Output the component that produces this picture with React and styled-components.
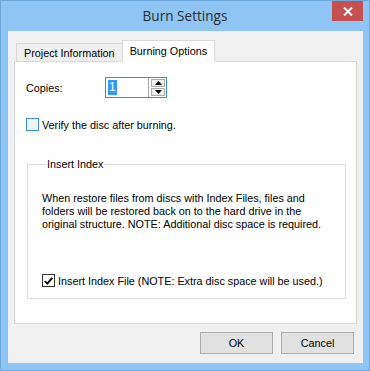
import styled, { createGlobalStyle } from "styled-components";

const Global = createGlobalStyle`
  html, body {
    margin: 0;
    padding: 0;
    background: #ffffff;
  }
  * {
    box-sizing: border-box;
  }
`;

const Window = styled.div`
  width: 370px;
  height: 371px;
  background: #8ec5f4;
  border: 1px solid #6ea9de;
  display: flex;
  flex-direction: column;
  font-family: "Liberation Sans", Arial, sans-serif;
  font-size: 10.8px;
  color: #000;
`;

const TitleBar = styled.div`
  height: 30px;
  display: grid;
  grid-template-columns: 1fr auto 1fr;
  align-items: start;
`;

const Title = styled.div`
  grid-column: 2;
  font-family: "Open Sans", "Noto Sans", sans-serif;
  font-size: 13.6px;
  color: #2b2b2b;
  line-height: 29px;
`;

const Close = styled.div`
  grid-column: 3;
  justify-self: end;
  width: 31px;
  height: 20px;
  margin-right: 6px;
  background: #c75050;
  display: flex;
  align-items: center;
  justify-content: center;
`;

const Client = styled.div`
  flex: 1;
  margin: 0 6px 7px 7px;
  background: #f0f0f0;
  padding: 8px 9px 9px 6px;
  display: flex;
  flex-direction: column;
`;

const TabStrip = styled.div`
  display: flex;
  align-items: flex-end;
  padding-left: 2px;
  height: 22px;
  position: relative;
  z-index: 1;
`;

const Tab = styled.div`
  height: ${(p) => (p.$active ? "22px" : "18px")};
  padding: 0 ${(p) => (p.$active ? "7px" : "7px")};
  margin-left: ${(p) => (p.$active ? "-1px" : "0")};
  margin-bottom: ${(p) => (p.$active ? "-1px" : "0")};
  background: ${(p) => (p.$active ? "#ffffff" : "#f0f0f0")};
  border: 1px solid #d9d9d9;
  border-bottom: ${(p) => (p.$active ? "1px solid #ffffff" : "none")};
  display: flex;
  align-items: center;
`;

const Panel = styled.div`
  height: 263px;
  margin-right: -3px;
  background: #ffffff;
  border: 1px solid #d9d9d9;
  padding: 15px 9px 0 11px;
  display: flex;
  flex-direction: column;
`;

const Row = styled.div`
  display: flex;
  align-items: center;
`;

const Label = styled.div`
  width: 79px;
`;

const Spin = styled.div`
  width: 62px;
  height: 21px;
  border: 1px solid #3c8ee0;
  display: flex;
  align-items: center;
  padding-left: 2px;
`;

const Selected = styled.span`
  background: #3399ff;
  color: #fff;
  font-size: 12px;
  line-height: 15px;
  padding: 0 1px;
`;

const SpinButtons = styled.div`
  margin-left: auto;
  height: 100%;
  display: flex;
  flex-direction: column;
  justify-content: center;
  gap: 1px;
  padding: 1px 1px 1px 2px;
  border-left: 1px solid #a0a0a0;
`;

const SpinButton = styled.div`
  width: 14px;
  height: 8px;
  background: #f0f0f0;
  border: 1px solid #acacac;
  display: flex;
  align-items: center;
  justify-content: center;
`;

const Check = styled.div`
  width: 13px;
  height: 13px;
  border: 1px solid ${(p) => (p.$hover ? "#3c8ee0" : "#333")};
  background: ${(p) => (p.$hover ? "#eef6ff" : "#fff")};
  display: flex;
  align-items: center;
  justify-content: center;
  margin-right: 3px;
`;

const VerifyRow = styled(Row)`
  margin-top: 20px;
`;

const Group = styled.fieldset`
  margin: 27px 0 0 1px;
  width: 319px;
  height: 141px;
  border: 1px solid #dcdcdc;
  padding: 22px 0 0 14px;
`;

const Legend = styled.legend`
  padding: 0 1px;
  margin-left: 4px;
`;

const Para = styled.p`
  margin: 0;
  line-height: 13px;
  width: 285px;
`;

const GroupCheck = styled(Row)`
  margin-top: 43px;
`;

const Footer = styled.div`
  margin-top: 8px;
  display: flex;
  justify-content: flex-end;
  gap: 8px;
`;

const Button = styled.div`
  width: 73px;
  height: 22px;
  background: #e1e1e1;
  border: 1px solid #adadad;
  display: flex;
  align-items: center;
  justify-content: center;
`;

const Arrow = ({ up }) => (
  <svg width="7" height="4" viewBox="0 0 7 4">
    <path d={up ? "M0 4 L3.5 0 L7 4 Z" : "M0 0 L7 0 L3.5 4 Z"} fill="#000" />
  </svg>
);

export default function App() {
  return (
    <>
      <Global />
      <Window>
        <TitleBar>
          <Title>Burn Settings</Title>
          <Close>
            <svg width="10" height="9" viewBox="0 0 10 9">
              <path d="M1 0.5 L9 8.5 M9 0.5 L1 8.5" stroke="#fff" strokeWidth="2" />
            </svg>
          </Close>
        </TitleBar>
        <Client>
          <TabStrip>
            <Tab>Project Information</Tab>
            <Tab $active>Burning Options</Tab>
          </TabStrip>
          <Panel>
            <Row>
              <Label>Copies:</Label>
              <Spin>
                <Selected>1</Selected>
                <SpinButtons>
                  <SpinButton>
                    <Arrow up />
                  </SpinButton>
                  <SpinButton>
                    <Arrow />
                  </SpinButton>
                </SpinButtons>
              </Spin>
            </Row>
            <VerifyRow>
              <Check $hover />
              <div>Verify the disc after burning.</div>
            </VerifyRow>
            <Group>
              <Legend>Insert Index</Legend>
              <Para>
                When restore files from discs with Index Files, files and
                folders will be restored back on to the hard drive in the
                original structure. NOTE: Additional disc space is required.
              </Para>
              <GroupCheck>
                <Check>
                  <svg width="9" height="8" viewBox="0 0 9 8">
                    <path d="M0.8 4 L3.3 6.6 L8.3 0.8" stroke="#000" strokeWidth="1.8" fill="none" />
                  </svg>
                </Check>
                <div>Insert Index File (NOTE: Extra disc space will be used.)</div>
              </GroupCheck>
            </Group>
          </Panel>
          <Footer>
            <Button>OK</Button>
            <Button>Cancel</Button>
          </Footer>
        </Client>
      </Window>
    </>
  );
}
